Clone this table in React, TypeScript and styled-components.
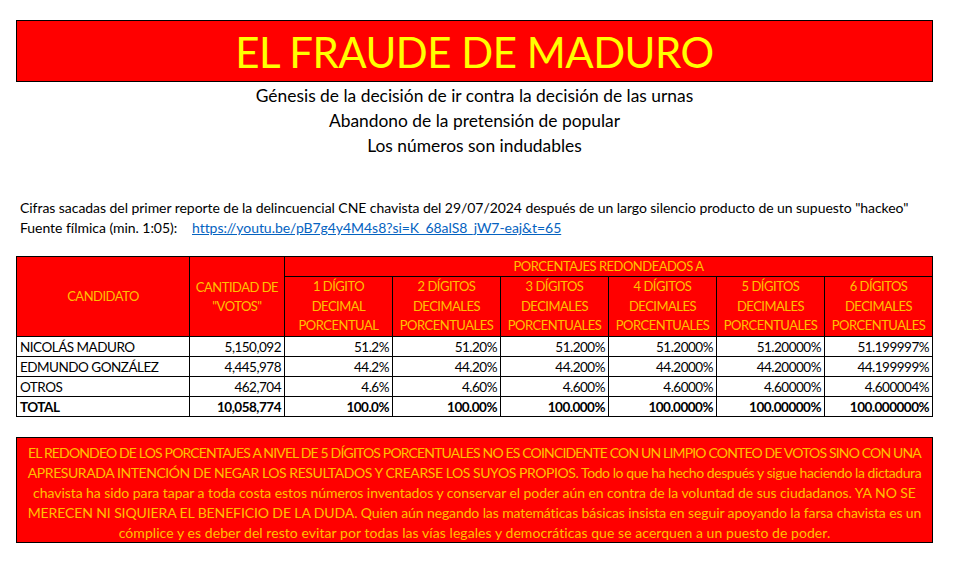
import React from "react";
import styled, { createGlobalStyle } from "styled-components";

const Global = createGlobalStyle`
  html, body { margin: 0; padding: 0; background: #ffffff; }
  body { font-family: Lato, "Noto Sans", sans-serif; color: #000; }
`;

const RED = "#ff0000";
const GOLD = "#ffc000";

const Page = styled.div`
  width: 917px;
  padding: 20px 0 0 16px;
`;

const TitleBox = styled.div`
  box-sizing: border-box;
  height: 62px;
  border: 1px solid #000;
  background: ${RED};
  color: #ffff00;
  font-size: 42px;
  line-height: 62px;
  text-align: center;
  letter-spacing: -0.5px;
`;

const Subtitles = styled.div`
  margin-top: 1px;
  text-align: center;
  font-size: 17.4px;
  line-height: 25px;
`;

const Source = styled.div`
  margin-top: 40px;
  padding-left: 4px;
  font-size: 14px;
  line-height: 20px;
  letter-spacing: -0.05px;
`;

const SourceLabel = styled.span`
  display: inline-block;
  width: 172px;
`;

const Link = styled.a`
  color: #0563c1;
  text-decoration: underline;
`;

const Table = styled.table`
  margin-top: 18px;
  width: 917px;
  border-collapse: collapse;
  table-layout: fixed;
`;

const Th = styled.th<{ $tall?: boolean }>`
  background: ${RED};
  color: ${GOLD};
  font-weight: normal;
  font-size: 13px;
  letter-spacing: -0.5px;
  border: 1px solid #000;
  padding: 0;
  line-height: ${(p) => (p.$tall ? "19.6px" : "19px")};
  height: ${(p) => (p.$tall ? "59px" : "19px")};
  text-align: center;
  vertical-align: middle;
  white-space: nowrap;
`;

const Td = styled.td<{ $num?: boolean; $bold?: boolean }>`
  border: 1px solid #000;
  height: 18px;
  line-height: 18px;
  font-size: 13.5px;
  letter-spacing: -0.5px;
  padding: 1px ${(p) => (p.$num ? "3px" : "2px")} 0 ${(p) => (p.$num ? "2px" : "3px")};
  text-align: ${(p) => (p.$num ? "right" : "left")};
  font-weight: ${(p) => (p.$bold ? "bold" : "normal")};
  white-space: nowrap;
`;

const Note = styled.div`
  box-sizing: border-box;
  margin-top: 20px;
  height: 106px;
  border: 1px solid #000;
  background: ${RED};
  color: ${GOLD};
  font-size: 14px;
  line-height: 20px;
  text-align: center;
  padding: 5px 0 0;
  overflow: hidden;
`;

const NoteLine = styled.div<{ $ls: number }>`
  white-space: nowrap;
  letter-spacing: ${(p) => p.$ls}px;
`;

const pctCols = [1, 2, 3, 4, 5, 6];

const rows: { name: string; votes: string; pcts: string[]; bold?: boolean }[] = [
  { name: "NICOLÁS MADURO", votes: "5,150,092", pcts: ["51.2%", "51.20%", "51.200%", "51.2000%", "51.20000%", "51.199997%"] },
  { name: "EDMUNDO GONZÁLEZ", votes: "4,445,978", pcts: ["44.2%", "44.20%", "44.200%", "44.2000%", "44.20000%", "44.199999%"] },
  { name: "OTROS", votes: "462,704", pcts: ["4.6%", "4.60%", "4.600%", "4.6000%", "4.60000%", "4.600004%"] },
  { name: "TOTAL", votes: "10,058,774", pcts: ["100.0%", "100.00%", "100.000%", "100.0000%", "100.00000%", "100.000000%"], bold: true },
];

const noteLines: { text: string; ls: number }[] = [
  { text: "EL REDONDEO DE LOS PORCENTAJES A NIVEL DE 5 DÍGITOS PORCENTUALES NO ES COINCIDENTE CON UN LIMPIO CONTEO DE VOTOS SINO CON UNA", ls: -0.84 },
  { text: "APRESURADA INTENCIÓN DE NEGAR LOS RESULTADOS Y CREARSE LOS SUYOS PROPIOS. Todo lo que ha hecho después y sigue haciendo la dictadura", ls: -0.43 },
  { text: "chavista ha sido para tapar a toda costa estos números inventados y conservar el poder aún en contra de la voluntad de sus ciudadanos. YA NO SE", ls: -0.06 },
  { text: "MERECEN NI SIQUIERA EL BENEFICIO DE LA DUDA. Quien aún negando las matemáticas básicas insista en seguir apoyando la farsa chavista es un", ls: -0.11 },
  { text: "cómplice y es deber del resto evitar por todas las vías legales y democráticas que se acerquen a un puesto de poder.", ls: 0.06 },
];

export default function App() {
  return (
    <>
      <Global />
      <Page>
        <TitleBox>EL FRAUDE DE MADURO</TitleBox>
        <Subtitles>
          <div>Génesis de la decisión de ir contra la decisión de las urnas</div>
          <div>Abandono de la pretensión de popular</div>
          <div>Los números son indudables</div>
        </Subtitles>
        <Source>
          <div>
            Cifras sacadas del primer reporte de la delincuencial CNE chavista del 29/07/2024 después de un largo silencio producto de un supuesto "hackeo"
          </div>
          <div>
            <SourceLabel>Fuente fílmica (min. 1:05):</SourceLabel>
            <Link href="#">https://youtu.be/pB7g4y4M4s8?si=K_68alS8_jW7-eaj&amp;t=65</Link>
          </div>
        </Source>
        <Table>
          <colgroup>
            <col style={{ width: 173 }} />
            <col style={{ width: 95 }} />
            {pctCols.map((c) => (
              <col key={c} style={{ width: 108 }} />
            ))}
          </colgroup>
          <thead>
            <tr>
              <Th rowSpan={2}>CANDIDATO</Th>
              <Th rowSpan={2}>
                CANTIDAD DE
                <br />
                "VOTOS"
              </Th>
              <Th colSpan={6}>PORCENTAJES REDONDEADOS A</Th>
            </tr>
            <tr>
              {pctCols.map((c) => (
                <Th key={c} $tall>
                  {c === 1 ? "1 DÍGITO" : `${c} DÍGITOS`}
                  <br />
                  {c === 1 ? "DECIMAL" : "DECIMALES"}
                  <br />
                  {c === 1 ? "PORCENTUAL" : "PORCENTUALES"}
                </Th>
              ))}
            </tr>
          </thead>
          <tbody>
            {rows.map((r) => (
              <tr key={r.name}>
                <Td $bold={r.bold}>{r.name}</Td>
                <Td $num $bold={r.bold}>{r.votes}</Td>
                {r.pcts.map((p, i) => (
                  <Td key={i} $num $bold={r.bold}>{p}</Td>
                ))}
              </tr>
            ))}
          </tbody>
        </Table>
        <Note>
          {noteLines.map((l, i) => (
            <NoteLine key={i} $ls={l.ls}>{l.text}</NoteLine>
          ))}
        </Note>
      </Page>
    </>
  );
}
